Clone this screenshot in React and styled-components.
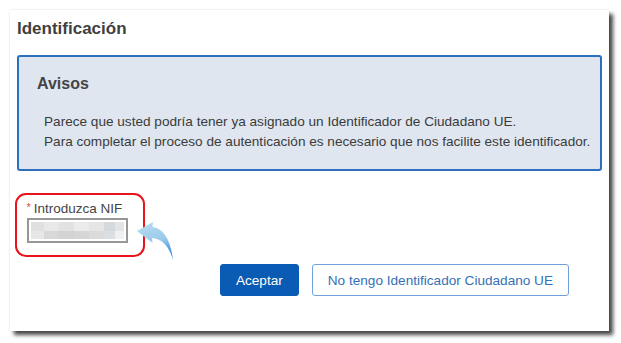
import React from "react";
import styled, { createGlobalStyle } from "styled-components";

const GlobalStyle = createGlobalStyle`
  html, body {
    margin: 0;
    padding: 0;
    background: #ffffff;
    font-family: "Liberation Sans", Arial, sans-serif;
  }
`;

// Layout
const Page = styled.div`
  width: 621px;
  height: 343px;
  padding: 10px 0 0 10px;
  box-sizing: border-box;
`;

const Card = styled.section`
  width: 599px;
  height: 321px;
  box-sizing: border-box;
  background: #ffffff;
  padding: 8px 7px 0 7px;
  box-shadow: 4px 4px 4px rgba(0, 0, 0, 0.72), 0 0 2px rgba(0, 0, 0, 0.12);
  display: flex;
  flex-direction: column;
`;

const Title = styled.h2`
  margin: 0;
  font-size: 17px;
  line-height: 22px;
  font-weight: bold;
  color: #3f3f3f;
`;

const Notice = styled.div`
  margin-top: 15px;
  width: 585px;
  box-sizing: border-box;
  border: 2px solid #2b6fbe;
  border-radius: 3px;
  background: #dfe6ef;
  padding: 17px 0 17px 18px;
`;

const NoticeTitle = styled.h3`
  margin: 0;
  font-size: 16px;
  line-height: 20px;
  font-weight: bold;
  color: #454545;
`;

const NoticeText = styled.p`
  margin: 18px 0 0 7px;
  font-size: 13.6px;
  line-height: 20px;
  color: #3b3b3b;
  white-space: nowrap;
`;

// Field with the red annotation round it
const FieldArea = styled.div`
  position: relative;
  margin: 22px 0 0 -2px;
  width: 130px;
`;

const Highlight = styled.div`
  box-sizing: border-box;
  width: 130px;
  height: 64px;
  border: 2.5px solid #e8141c;
  border-radius: 11px;
  padding: 3.5px 0 0 9.5px;
`;

const Label = styled.label`
  display: block;
  font-size: 13.5px;
  line-height: 16px;
  color: #444444;
`;

const Required = styled.span`
  color: #e0454a;
  font-size: 11px;
  vertical-align: 2px;
  margin-right: 3px;
`;

const FakeInput = styled.div`
  margin-top: 1.5px;
  width: 101px;
  height: 25px;
  box-sizing: border-box;
  border: 2px solid #979797;
  padding: 2px;
  display: flex;
  flex-direction: column;
`;

const BlurRow = styled.div`
  flex: 1;
  background: ${(p) => p.$bg};
`;

const Arrow = styled.svg`
  position: absolute;
  left: 121px;
  top: 27px;
`;

const Actions = styled.div`
  display: flex;
  justify-content: flex-end;
  gap: 13px;
  margin-top: 7px;
  padding-right: 33px;
  width: 585px;
  box-sizing: border-box;
`;

const Button = styled.button`
  height: 32px;
  box-sizing: border-box;
  padding: 0 15px;
  border-radius: 3px;
  font-family: "Liberation Sans", Arial, sans-serif;
  font-size: 13.6px;
  cursor: pointer;
  border: 1.5px solid ${({ $primary }) => ($primary ? "#0a5bb4" : "#6ea2dc")};
  background: ${({ $primary }) => ($primary ? "#0a5bb4" : "#ffffff")};
  color: ${({ $primary }) => ($primary ? "#ffffff" : "#3670b6")};
`;

const topBlur =
  "linear-gradient(to right, #e0e0e0 0 14%, #e8e8e8 14% 30%, #e2e2e2 30% 46%, #ebebeb 46% 62%, #e5e5e5 62% 78%, #d5d8dc 78% 90%, #e2e4e6 90% 100%)";
const bottomBlur =
  "linear-gradient(to right, #e7e7e7 0 14%, #d8d8d8 14% 30%, #d3d3d3 30% 46%, #d6d6d6 46% 62%, #dbdbdb 62% 78%, #dcdfe2 78% 90%, #f0f1f2 90% 100%)";

export default function App() {
  return (
    <>
      <GlobalStyle />
      <Page>
        <Card>
          <Title>Identificación</Title>
          <Notice>
            <NoticeTitle>Avisos</NoticeTitle>
            <NoticeText>
              Parece que usted podría tener ya asignado un Identificador de Ciudadano UE.
              <br />
              Para completar el proceso de autenticación es necesario que nos facilite este identificador.
            </NoticeText>
          </Notice>
          <FieldArea>
            <Highlight>
              <Label>
                <Required>*</Required>Introduzca NIF
              </Label>
              <FakeInput>
                <BlurRow $bg={topBlur} />
                <BlurRow $bg={bottomBlur} />
              </FakeInput>
            </Highlight>
            <Arrow width="44" height="44" viewBox="0 0 44 44">
              <defs>
                <linearGradient id="arrowFill" x1="0" y1="0" x2="0.3" y2="1">
                  <stop offset="0" stopColor="#b9dcee" />
                  <stop offset="0.6" stopColor="#9ccbeb" />
                  <stop offset="1" stopColor="#3d8fe2" />
                </linearGradient>
              </defs>
              <path
                d="M1 11 L17 2 L16.5 7 Q33 9 37 40 Q31 19 16 18 L16.5 23 Z"
                fill="url(#arrowFill)"
              />
            </Arrow>
          </FieldArea>
          <Actions>
            <Button $primary>Aceptar</Button>
            <Button>No tengo Identificador Ciudadano UE</Button>
          </Actions>
        </Card>
      </Page>
    </>
  );
}
